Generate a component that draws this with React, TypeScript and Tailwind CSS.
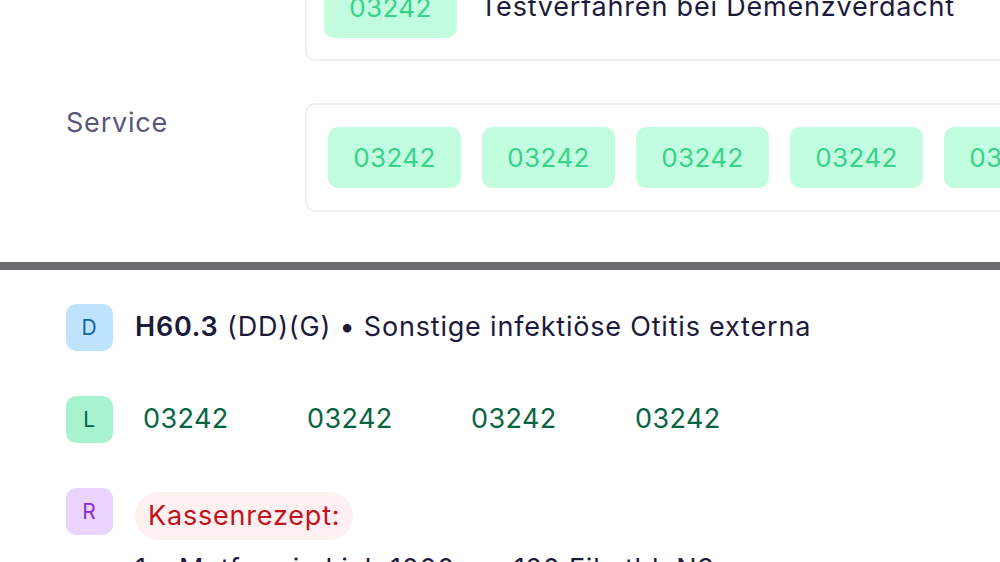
import React from "react";

const codes = ["03242", "03242", "03242", "03242", "03242"];

const Pill = ({ code }: { code: string }) => (
  <div className="flex h-[61px] w-[133px] shrink-0 items-center justify-center rounded-[10px] bg-[#c3fde0] text-[26px] tracking-[0.4px] text-[#36d389]">
    {code}
  </div>
);

const Badge = ({ letter, tone }: { letter: string; tone: string }) => (
  <div
    className={`flex h-[47px] w-[47px] shrink-0 items-center justify-center rounded-[10px] text-[21px] ${tone}`}
  >
    {letter}
  </div>
);

export default function App() {
  return (
    <div className="h-[562px] w-[1000px] overflow-hidden bg-white font-['Inter',sans-serif] text-[27px] tracking-[0.8px] text-[#1c1a3b]">
      <div className="-mt-[46px]">
        {/* Form rows */}
        <div className="flex flex-col gap-[42px] pl-[66px]">
          <div className="flex">
            <div className="w-[239px] shrink-0" />
            <div className="flex w-[900px] shrink-0 items-center gap-[23px] rounded-[10px] border-2 border-[#eeeef2] py-[21px] pl-[17px]">
              <Pill code="03242" />
              <span className="whitespace-nowrap">Testverfahren bei Demenzverdacht</span>
            </div>
          </div>

          <div className="flex items-start">
            <div className="w-[239px] shrink-0 pt-[2px] leading-[36px] text-[#58567a]">Service</div>
            <div className="flex w-[900px] shrink-0 gap-[21px] rounded-[10px] border-2 border-[#eeeef2] py-[22px] pl-[21px]">
              {codes.map((c, i) => (
                <Pill key={i} code={c} />
              ))}
            </div>
          </div>
        </div>

        <div className="mt-[50px] h-2 bg-[#6b6a6f]" />

        {/* Summary list */}
        <div className="flex flex-col gap-[45px] pl-[66px] pt-[34px]">
          <div className="flex items-center gap-[22px]">
            <Badge letter="D" tone="bg-[#bee3fc] text-[#0b66a8]" />
            <p className="whitespace-nowrap">
              <span className="font-semibold">H60.3</span> (DD)(G) • Sonstige infektiöse Otitis externa
            </p>
          </div>

          <div className="flex items-center gap-[22px]">
            <Badge letter="L" tone="bg-[#a7f3d0] text-[#065f46]" />
            <div className="flex">
              {codes.slice(0, 4).map((c, i) => (
                <span key={i} className="w-[164px] pl-2 tracking-[0.4px] text-[#08633f]">
                  {c}
                </span>
              ))}
            </div>
          </div>

          <div className="flex items-start gap-[22px]">
            <Badge letter="R" tone="bg-[#ead5fe] text-[#8a2bd6]" />
            <div className="mt-1 flex flex-col items-start gap-[9px]">
              <span className="flex h-[48px] items-center rounded-full bg-[#fff0f2] px-[13px] text-[#c2121c]">
                Kassenrezept:
              </span>
              <p className="whitespace-nowrap">1 x Metformin Lich 1000 mg 120 Filmtbl. N3</p>
            </div>
          </div>
        </div>
      </div>
    </div>
  );
}
